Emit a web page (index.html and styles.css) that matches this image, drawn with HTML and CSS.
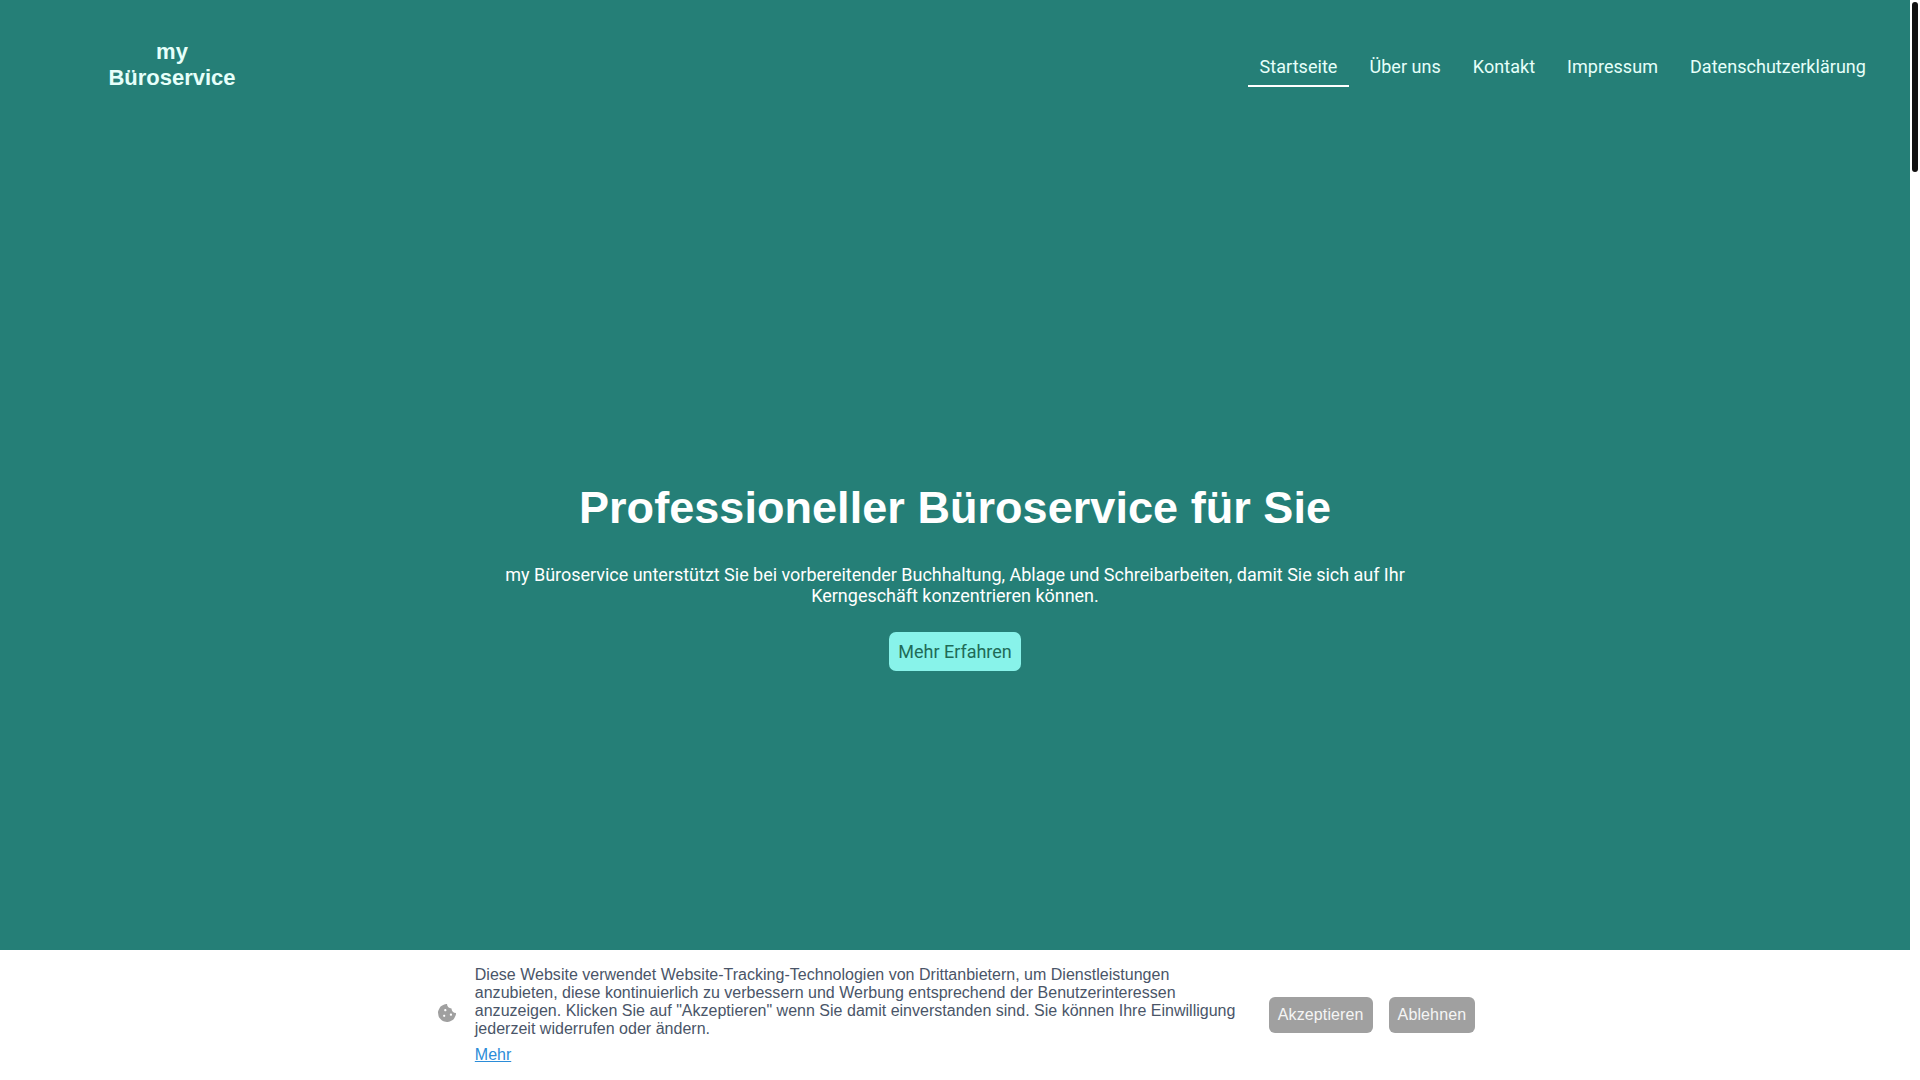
FILE: index.html
```html
<!DOCTYPE html>
<html lang="de">
<head>
<meta charset="utf-8">
<title>my Büroservice</title>
<link rel="stylesheet" href="styles.css">
</head>
<body>
<main class="page">
  <section class="hero">
    <header class="topbar">
      <a class="logo" href="#">my Büroservice</a>
      <nav class="nav">
        <a class="nav-link active" href="#">Startseite</a>
        <a class="nav-link" href="#">Über uns</a>
        <a class="nav-link" href="#">Kontakt</a>
        <a class="nav-link" href="#">Impressum</a>
        <a class="nav-link" href="#">Datenschutzerklärung</a>
      </nav>
    </header>
    <div class="hero-body">
      <h1 class="hero-title">Professioneller Büroservice für Sie</h1>
      <p class="hero-text">my Büroservice unterstützt Sie bei vorbereitender Buchhaltung, Ablage und Schreibarbeiten, damit Sie sich auf Ihr Kerngeschäft konzentrieren können.</p>
      <a class="hero-btn" href="#">Mehr Erfahren</a>
    </div>
  </section>
  <aside class="cookie">
    <div class="cookie-inner">
      <svg class="cookie-icon" viewBox="0 0 512 512" aria-hidden="true"><path d="M510.52 255.82c-69.97-.85-126.47-57.69-126.47-127.86-70.17 0-127-56.49-127.86-126.45-27.26-4.14-55.13.3-79.72 12.82l-69.13 35.22a132.221 132.221 0 0 0-57.79 57.81l-35.1 68.88a132.645 132.645 0 0 0-12.82 80.95l12.08 76.27a132.521 132.521 0 0 0 37.16 72.96l54.77 54.76a132.036 132.036 0 0 0 72.71 37.06l76.71 12.15c27.51 4.36 55.7-.11 80.53-12.76l69.13-35.21a132.273 132.273 0 0 0 57.79-57.81l35.1-68.88c12.56-24.64 17.01-52.58 12.91-79.91zM176 368c-17.67 0-32-14.33-32-32s14.33-32 32-32 32 14.33 32 32-14.33 32-32 32zm32-160c-17.67 0-32-14.33-32-32s14.33-32 32-32 32 14.33 32 32-14.33 32-32 32zm160 128c-17.67 0-32-14.33-32-32s14.33-32 32-32 32 14.33 32 32-14.33 32-32 32z"/></svg>
      <div class="cookie-copy">
        <p class="cookie-text">Diese Website verwendet Website-Tracking-Technologien von Drittanbietern, um Dienstleistungen anzubieten, diese kontinuierlich zu verbessern und Werbung entsprechend der Benutzerinteressen anzuzeigen. Klicken Sie auf "Akzeptieren" wenn Sie damit einverstanden sind. Sie können Ihre Einwilligung jederzeit widerrufen oder ändern.</p>
        <a class="cookie-more" href="#">Mehr</a>
      </div>
      <div class="cookie-actions">
        <button class="cookie-btn" type="button">Akzeptieren</button>
        <button class="cookie-btn" type="button">Ablehnen</button>
      </div>
    </div>
  </aside>
</main>
<div class="scrollbar" aria-hidden="true"><div class="scrollbar-thumb"></div></div>
</body>
</html>
```

FILE: styles.css
```css
* { box-sizing: border-box; }
html, body { height: 100%; }
body { margin: 0; display: flex; overflow: hidden; font-family: "Liberation Sans", Arial, sans-serif; background: #fff; }
a { text-decoration: none; }

.page { flex: 1; min-width: 0; height: 100%; display: flex; flex-direction: column; }
.scrollbar { flex: none; width: 10px; height: 100%; padding: 2px 2px 0; background: #fff; }
.scrollbar-thumb { height: 170px; border-radius: 3px; background: #111; }

.hero { flex: 1; min-height: 0; background: #257f77; color: #fff; display: flex; flex-direction: column; }
.topbar { display: flex; justify-content: space-between; align-items: flex-start; padding: 39px 32px 0 106px; }
.logo { width: 132px; text-align: center; color: #e6fffa; font-weight: 700; font-size: 22px; line-height: 26px; }
.nav { display: flex; gap: 8px; margin-top: 13px; }
.nav-link { font-family: Roboto, sans-serif; font-size: 18px; line-height: 21px; letter-spacing: 0.04px; padding: 4px 12px 8px; color: #e6fffa; border-bottom: 2px solid transparent; }
.nav-link.active { border-bottom-color: #fff; }

.hero-body { display: flex; flex-direction: column; align-items: center; padding-top: 391px; }
.hero-title { margin: 0; font-size: 45px; line-height: 52px; letter-spacing: 0.05px; font-weight: 700; color: #fff; text-align: center; }
.hero-text { margin: 30px 0 0; width: 920px; font-family: Roboto, sans-serif; font-size: 18px; line-height: 21px; letter-spacing: -0.02px; text-align: center; color: #fff; }
.hero-btn { margin-top: 26px; height: 39px; padding: 0 9px; display: flex; align-items: center; border-radius: 7px; background: #88f3ea; color: #1f6b57; font-family: Roboto, sans-serif; font-size: 18px; }

.cookie { flex: none; height: 130px; background: #fff; padding: 16px 0 16px 2px; display: flex; justify-content: center; }
.cookie-inner { display: flex; align-items: center; }
.cookie-icon { width: 18px; height: 18px; flex: none; margin: 0 19px 4px 1px; fill: #a0a0a0; }
.cookie-copy { width: 768px; flex: none; }
.cookie-text { margin: 0; font-size: 16px; line-height: 18px; letter-spacing: 0.012px; color: #4a5568; }
.cookie-more { display: block; margin-top: 8px; font-size: 16px; line-height: 18px; color: #2b8cd8; text-decoration: underline; }
.cookie-actions { display: flex; gap: 16px; margin-left: 26px; }
.cookie-btn { height: 36px; padding: 0 9px; border: 0; border-radius: 6px; background: #a0a0a0; color: #f5f5f5; font-family: "Liberation Sans", Arial, sans-serif; font-size: 16px; letter-spacing: 0.12px; }
```
